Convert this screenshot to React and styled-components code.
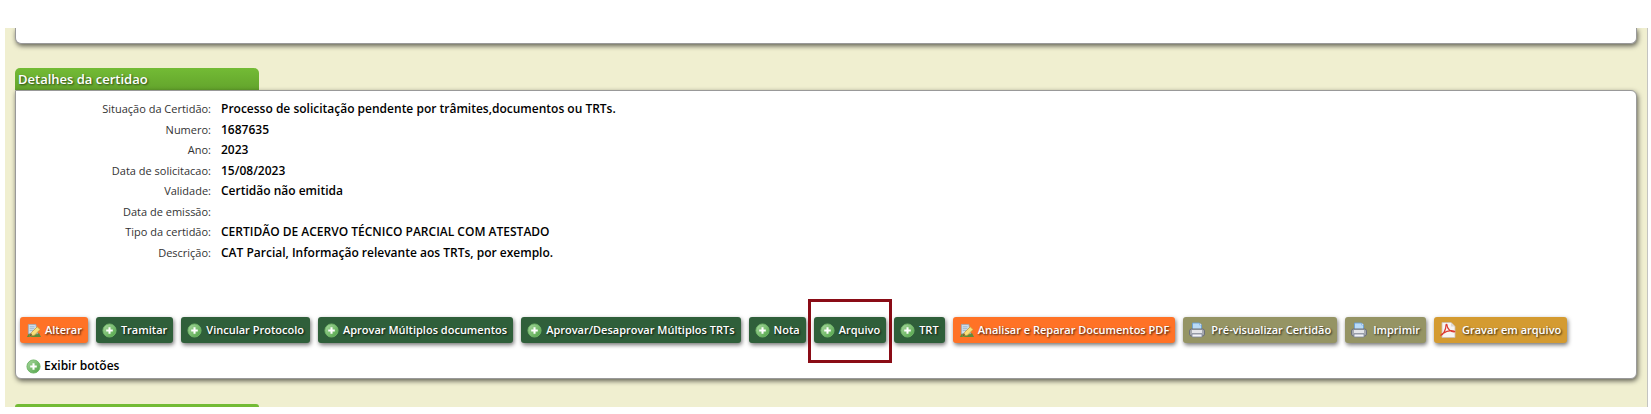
import React, { useState } from "react";
import styled, { createGlobalStyle, css } from "styled-components";

const GlobalStyle = createGlobalStyle`
  * { box-sizing: border-box; }
  body {
    margin: 0;
    background: #fff;
    font-family: "Open Sans", "Noto Sans", sans-serif;
    font-size: 12px;
    color: #000;
  }
`;

const Page = styled.main`
  margin: 28px 3px 7px 5px;
  padding: 0 10px;
  background: #f0efd0;
  border-right: 1px solid #c4c4c0;
  overflow: hidden;
`;

const Panel = styled.section`
  background: #fff;
  border: 1px solid #999;
  border-radius: 0 6px 6px 6px;
  box-shadow: 1px 2px 5px rgba(0, 0, 0, 0.6);
  padding: 8px 4px 4px;
`;

const PanelEnd = styled(Panel)`
  height: 16px;
  border-top: none;
  border-radius: 0 0 6px 6px;
  margin-bottom: 24px;
`;

const Tab = styled.h2`
  width: 244px;
  height: 22px;
  margin: 0;
  padding: 0 3px;
  border-radius: 5px 5px 0 0;
  background: linear-gradient(#73bb35, #63a42c);
  color: #fff;
  font-size: 13px;
  font-weight: 600;
  line-height: 22px;
  text-shadow: 1px 1px 2px rgba(0, 0, 0, 0.6);
`;

const NextTab = styled.div`
  width: 244px;
  height: 3px;
  margin-top: 25px;
  border-radius: 5px 5px 0 0;
  background: #73bb35;
`;

const Details = styled.dl`
  margin: 0 0 54px;
`;

const Row = styled.div`
  display: flex;
  gap: 10px;
  line-height: 20px;
  &:nth-child(odd) { padding-bottom: 1px; }
`;

const Label = styled.dt`
  width: 191px;
  text-align: right;
  color: #333;
  font-size: 11px;
`;

const Value = styled.dd`
  margin: 0;
  font-weight: 600;
`;

const Toolbar = styled.div`
  display: flex;
  flex-wrap: wrap;
  gap: 8px;
`;

const tones = {
  orange: "#ff7226",
  green: "#2f5f3a",
  olive: "#959464",
  gold: "#d49b31",
};

const ActionButton = styled.button`
  position: relative;
  display: flex;
  align-items: center;
  gap: ${p => p.$gap}px;
  height: 26px;
  padding: 0 6px;
  border: none;
  border-radius: 3px;
  background: ${p => tones[p.$tone]};
  box-shadow: 1px 2px 4px rgba(0, 0, 0, 0.55);
  color: #fff;
  font-family: inherit;
  font-size: 11px;
  font-weight: 600;
  line-height: 16px;
  white-space: nowrap;
  text-shadow: 1px 1px 2px rgba(0, 0, 0, 0.8);
  cursor: pointer;

  ${p => p.$marked && css`
    &::after {
      content: "";
      position: absolute;
      inset: -18px -6px -20px;
      border: 3px solid #8a0c16;
      pointer-events: none;
    }
  `}
`;

const ToggleButton = styled.button`
  display: flex;
  align-items: center;
  gap: 3px;
  height: 16px;
  margin: 15px 0 0 6px;
  padding: 0;
  border: none;
  background: none;
  color: #000;
  font-family: inherit;
  font-size: 12px;
  font-weight: 600;
  line-height: 16px;
  cursor: pointer;
`;

const Svg = styled.svg`
  display: block;
  flex: none;
`;

const AddIcon = () => (
  <Svg width="15" height="15" viewBox="0 0 16 16" aria-hidden="true">
    <defs>
      <linearGradient id="addFill" x1="0" y1="0" x2="1" y2="1">
        <stop offset="0" stopColor="#a9d8a0" />
        <stop offset="1" stopColor="#4fa446" />
      </linearGradient>
    </defs>
    <circle cx="8" cy="8" r="7" fill="url(#addFill)" stroke="#6fb467" />
    <path d="M8 4.500v7M4.500 8h7" stroke="#fff" strokeWidth="2.2" />
  </Svg>
);

const EditIcon = () => (
  <Svg width="15" height="15" viewBox="0 0 16 16" aria-hidden="true">
    <path d="M1 15l2-4h11l2 4z" fill="#5f8b3a" />
    <path d="M2.5 1.5h8l2 10h-10z" fill="#cfdde8" stroke="#8fa9bf" strokeWidth=".8" />
    <path d="M4 4h5M4 6h5M4 8h4" stroke="#9fb9cf" />
    <path d="M4 14l2-4 6-6 3 3-6 6z" fill="#f8e07c" stroke="#c39a35" strokeWidth=".8" />
    <path d="M4 14l1-3 2 2z" fill="#6b5636" />
  </Svg>
);

const PrinterIcon = () => (
  <Svg width="16" height="16" viewBox="0 0 16 16" aria-hidden="true">
    <path d="M3.5 8V1h7l2 2v5z" fill="#b9dbf8" stroke="#6c9fd4" strokeWidth=".9" />
    <path d="M10.5 1v2h2" fill="#fff" stroke="#6c9fd4" strokeWidth=".6" />
    <rect x=".5" y="7" width="15" height="7" rx="2" fill="#a5a8af" stroke="#6c7079" />
    <path d="M3 8h10v3H3z" fill="#e4e5e9" />
    <path d="M3 12h10v3H3z" fill="#f3f4f7" stroke="#7e8799" strokeWidth=".8" />
  </Svg>
);

const PdfIcon = () => (
  <Svg width="16" height="16" viewBox="0 0 16 16" aria-hidden="true">
    <path d="M2 .5h9l4 4v11H2z" fill="#f7f4f1" stroke="#c9bfb6" strokeWidth=".8" />
    <path d="M11 .5v4h4" fill="#ddd8d3" />
    <path
      d="M1 13c2 0 5-5 5-10 0-1 1-1 1 0 0 4 4 7 7 7 1 0 1-1 0-1-4-1-9 1-12 3-1 1-1 2-1 1z"
      fill="none"
      stroke="#dc3b32"
      strokeWidth="1.2"
    />
  </Svg>
);

const icons = { add: AddIcon, edit: EditIcon, printer: PrinterIcon, pdf: PdfIcon };

const details = [
  ["Situação da Certidão:", "Processo de solicitação pendente por trâmites,documentos ou TRTs."],
  ["Numero:", "1687635"],
  ["Ano:", "2023"],
  ["Data de solicitacao:", "15/08/2023"],
  ["Validade:", "Certidão não emitida"],
  ["Data de emissão:", ""],
  ["Tipo da certidão:", "CERTIDÃO DE ACERVO TÉCNICO PARCIAL COM ATESTADO"],
  ["Descrição:", "CAT Parcial, Informação relevante aos TRTs, por exemplo."],
];

const actions = [
  { label: "Alterar", icon: "edit", tone: "orange", gap: 4 },
  { label: "Tramitar", icon: "add", tone: "green", gap: 4 },
  { label: "Vincular Protocolo", icon: "add", tone: "green", gap: 4 },
  { label: "Aprovar Múltiplos documentos", icon: "add", tone: "green", gap: 4 },
  { label: "Aprovar/Desaprovar Múltiplos TRTs", icon: "add", tone: "green", gap: 4 },
  { label: "Nota", icon: "add", tone: "green", gap: 4 },
  { label: "Arquivo", icon: "add", tone: "green", gap: 4, marked: true },
  { label: "TRT", icon: "add", tone: "green", gap: 4 },
  { label: "Analisar e Reparar Documentos PDF", icon: "edit", tone: "orange", gap: 4 },
  { label: "Pré-visualizar Certidão", icon: "printer", tone: "olive", gap: 6 },
  { label: "Imprimir", icon: "printer", tone: "olive", gap: 6 },
  { label: "Gravar em arquivo", icon: "pdf", tone: "gold", gap: 6 },
];

const App = () => {
  const [expanded, setExpanded] = useState(false);

  return (
    <>
      <GlobalStyle />
      <Page>
        <PanelEnd />
        <Tab>Detalhes da certidao</Tab>
        <Panel>
          <Details>
            {details.map(([label, value]) => (
              <Row key={label}>
                <Label>{label}</Label>
                <Value>{value}</Value>
              </Row>
            ))}
          </Details>
          <Toolbar>
            {actions.map(a => {
              const Icon = icons[a.icon];
              return (
                <ActionButton key={a.label} type="button" $tone={a.tone} $gap={a.gap} $marked={a.marked}>
                  <Icon />
                  {a.label}
                </ActionButton>
              );
            })}
          </Toolbar>
          <ToggleButton type="button" aria-expanded={expanded} onClick={() => setExpanded(!expanded)}>
            <AddIcon />
            Exibir botões
          </ToggleButton>
        </Panel>
        <NextTab />
      </Page>
    </>
  );
};

export default App;
